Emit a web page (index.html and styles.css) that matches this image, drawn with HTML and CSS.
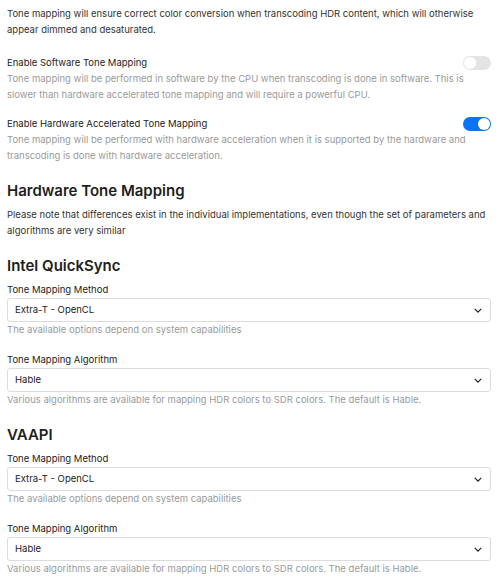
FILE: index.html
```html
<!DOCTYPE html>
<html>
<head>
<meta charset="utf-8">
<link rel="stylesheet" href="styles.css">
</head>
<body>
<div class="page">
  <p class="intro">Tone mapping will ensure correct color conversion when transcoding HDR content, which will otherwise appear dimmed and desaturated.</p>

  <div class="toggle-row first">
    <div class="toggle-line">
      <span class="label">Enable Software Tone Mapping</span>
      <span class="switch"><span class="knob"></span></span>
    </div>
    <p class="help">Tone mapping will be performed in software by the CPU when transcoding is done in software. This is slower than hardware accelerated tone mapping and will require a powerful CPU.</p>
  </div>

  <div class="toggle-row">
    <div class="toggle-line">
      <span class="label">Enable Hardware Accelerated Tone Mapping</span>
      <span class="switch on"><span class="knob"></span></span>
    </div>
    <p class="help">Tone mapping will be performed with hardware acceleration when it is supported by the hardware and transcoding is done with hardware acceleration.</p>
  </div>

  <h2 class="h-main">Hardware Tone Mapping</h2>
  <p class="note">Please note that differences exist in the individual implementations, even though the set of parameters and algorithms are very similar</p>

  <h3 class="h-sub">Intel QuickSync</h3>
  <div class="field">
    <div class="label">Tone Mapping Method</div>
    <div class="select"><span>Extra-T - OpenCL</span><svg class="chev" viewBox="0 0 10 6" width="8" height="5"><path d="M1 1l4 4 4-4" fill="none" stroke="#222" stroke-width="1.6"/></svg></div>
    <p class="help">The available options depend on system capabilities</p>
  </div>
  <div class="field second">
    <div class="label">Tone Mapping Algorithm</div>
    <div class="select"><span>Hable</span><svg class="chev" viewBox="0 0 10 6" width="8" height="5"><path d="M1 1l4 4 4-4" fill="none" stroke="#222" stroke-width="1.6"/></svg></div>
    <p class="help">Various algorithms are available for mapping HDR colors to SDR colors. The default is Hable.</p>
  </div>

  <h3 class="h-sub">VAAPI</h3>
  <div class="field">
    <div class="label">Tone Mapping Method</div>
    <div class="select"><span>Extra-T - OpenCL</span><svg class="chev" viewBox="0 0 10 6" width="8" height="5"><path d="M1 1l4 4 4-4" fill="none" stroke="#222" stroke-width="1.6"/></svg></div>
    <p class="help">The available options depend on system capabilities</p>
  </div>
  <div class="field second">
    <div class="label">Tone Mapping Algorithm</div>
    <div class="select"><span>Hable</span><svg class="chev" viewBox="0 0 10 6" width="8" height="5"><path d="M1 1l4 4 4-4" fill="none" stroke="#222" stroke-width="1.6"/></svg></div>
    <p class="help">Various algorithms are available for mapping HDR colors to SDR colors. The default is Hable.</p>
  </div>
</div>
</body>
</html>
```

FILE: styles.css
```css
* { box-sizing: border-box; }
html, body { margin: 0; padding: 0; background: #fff; }
body {
  font-family: Inter, "Noto Sans", sans-serif;
  font-size: 9.5px;
  line-height: 16px;
  color: #333;
}
p { margin: 0; }
.page { padding: 6px 10px 0 7px; }

.intro { color: #333; }

.toggle-row { margin-top: 13px; }
.toggle-row.first { margin-top: 17px; }
.toggle-line {
  display: flex;
  justify-content: space-between;
  align-items: center;
  height: 16px;
}
.label { color: #222; }
.help { color: #9a9a9a; }

.switch {
  width: 28px;
  height: 14px;
  border-radius: 7px;
  background: #e4e4e4;
  position: relative;
  display: inline-block;
  flex: none;
}
.switch .knob {
  position: absolute;
  left: 1px;
  top: 1px;
  width: 12px;
  height: 12px;
  border-radius: 50%;
  background: #fff;
}
.switch.on { background: #0a74f5; }
.switch.on .knob { left: 15px; }

.h-main {
  margin: 17px 0 6px;
  font-size: 15px;
  line-height: 20px;
  font-weight: 600;
  color: #1e1e1e;
}
.h-sub {
  margin: 17px 0 6px;
  font-size: 15px;
  line-height: 20px;
  font-weight: 600;
  color: #1e1e1e;
}
.field .label { margin-bottom: 0; }
.field.second { margin-top: 14px; }

.select {
  height: 24px;
  border: 1px solid #dcdcdc;
  border-radius: 3px;
  display: flex;
  align-items: center;
  justify-content: space-between;
  padding: 0 8px 0 7px;
  color: #222;
  background: #fff;
}
.chev { display: block; }
```
